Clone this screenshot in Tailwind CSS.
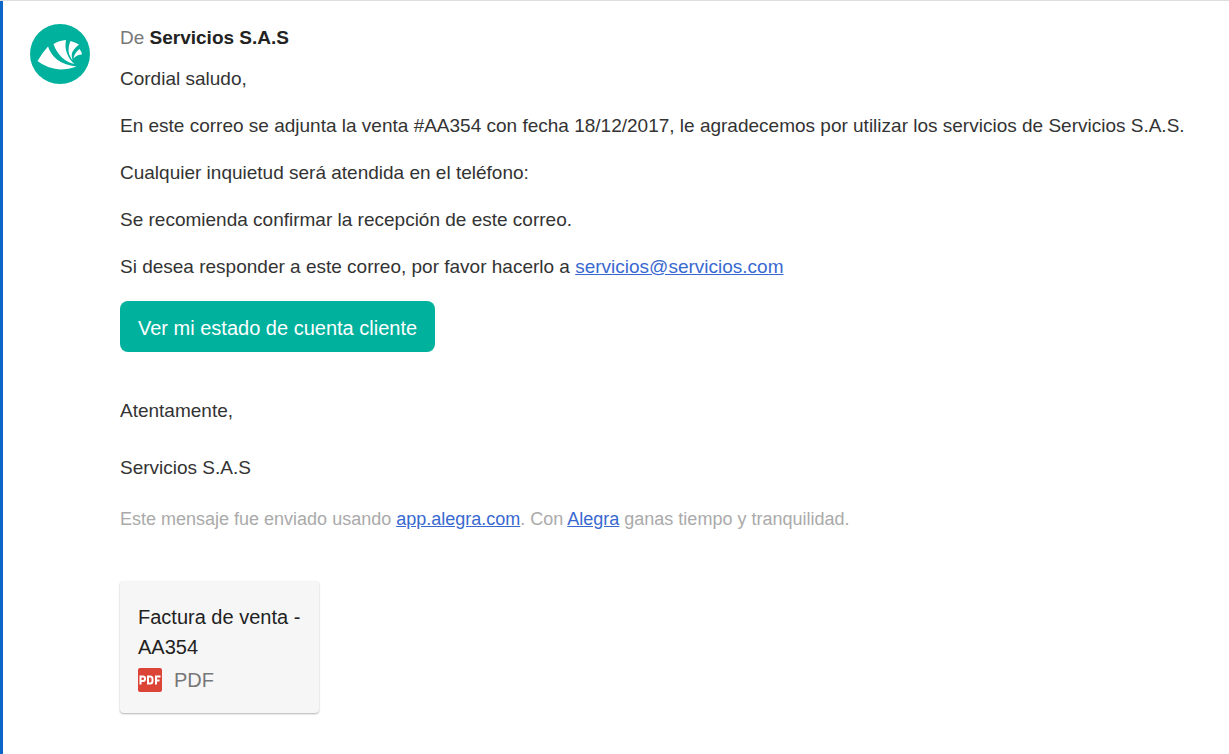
<!DOCTYPE html>
<html lang="es">
<head>
<meta charset="utf-8">
<meta name="viewport" content="width=device-width, initial-scale=1">
<title>Servicios S.A.S</title>
<script src="https://cdn.jsdelivr.net/npm/@tailwindcss/browser@4"></script>
</head>
<body class="bg-white">
<div class="h-px bg-[#dedede]"></div>
<main class="flex min-h-[calc(100vh-1px)] gap-[30px] border-l-3 border-[#0b66c8] pl-[27px] pr-5 pt-[23px] pb-10 font-['Liberation_Sans',Arial,sans-serif] text-[19px] leading-[27px] text-[#333]">
  <svg class="size-[60px] shrink-0" viewBox="0 0 60 60" role="img" aria-label="Alegra">
    <circle cx="30" cy="30" r="30" fill="#00b19d"/>
    <g fill="#fff">
      <path d="M7.500 37Q12 29 18 22.500Q20.500 30 27 35.500Q34 41 46.500 42.500Q39 45.500 30 45.500Q17 44.500 7.500 37Z"/>
      <path d="M23.500 20Q29 16.500 36 16Q34.500 23 37 29.500Q39.500 36 44.500 40Q37 38.500 31.500 33Q26 27.500 23.500 20Z"/>
      <path d="M40.500 17Q45 18 49 20.500Q43.500 25 42 29Q41 32 42.500 36Q38.500 31 38.500 26Q38.500 21 40.500 17Z"/>
      <path d="M49.500 25Q51.500 27.500 52 30.500Q47 30.500 43.500 34.500Q44.500 28.500 49.500 25Z"/>
    </g>
  </svg>
  <div class="min-w-0 flex-1">
    <p class="text-[#777]">De <strong class="text-[#222]">Servicios S.A.S</strong></p>
    <div class="mt-[14px] flex flex-col items-start gap-5">
      <p>Cordial saludo,</p>
      <p>En este correo se adjunta la venta #AA354 con fecha 18/12/2017, le agradecemos por utilizar los servicios de Servicios S.A.S.</p>
      <p>Cualquier inquietud será atendida en el teléfono:</p>
      <p>Se recomienda confirmar la recepción de este correo.</p>
      <p>Si desea responder a este correo, por favor hacerlo a <a class="text-[#3869d0] underline" href="mailto:servicios@servicios.com">servicios@servicios.com</a></p>
    </div>
    <button type="button" class="mt-[21px] block rounded-lg bg-[#00b19d] px-[18px] pt-[14px] pb-[10px] text-xl leading-[27px] text-white">Ver mi estado de cuenta cliente</button>
    <p class="mt-[45px]">Atentamente,</p>
    <p class="mt-[30px]">Servicios S.A.S</p>
    <p class="mt-[25px] text-lg leading-[27px] text-[#aaa]">Este mensaje fue enviado usando <a class="text-[#3869d0] underline" href="https://app.alegra.com">app.alegra.com</a>. Con <a class="text-[#3869d0] underline" href="https://www.alegra.com">Alegra</a> ganas tiempo y tranquilidad.</p>
    <a href="#factura" class="mt-12 block w-[199px] rounded-sm bg-[#f6f6f6] px-[18px] pt-[21px] pb-[18px] text-xl leading-[30px] text-[#222] shadow-[0_1px_2px_rgba(0,0,0,0.3)]">
      <span class="block">Factura de venta - AA354</span>
      <span class="mt-[3px] flex items-center gap-3 text-[#777]">
        <svg class="size-6" viewBox="0 0 24 24" aria-hidden="true">
          <rect width="24" height="24" rx="2" fill="#db4437"/>
          <path d="M2.500 16.500V8.500H5Q7 8.500 7 10.500V11Q7 13 5 13H2.500M10 8.500V15.500H12Q14.500 15.500 14.500 13V11Q14.500 8.500 12 8.500ZM18 16.500V8.500H22.500M18 12.500H21.500" fill="none" stroke="#fff" stroke-width="2"/>
        </svg>
        <span>PDF</span>
      </span>
    </a>
  </div>
</main>
</body>
</html>
